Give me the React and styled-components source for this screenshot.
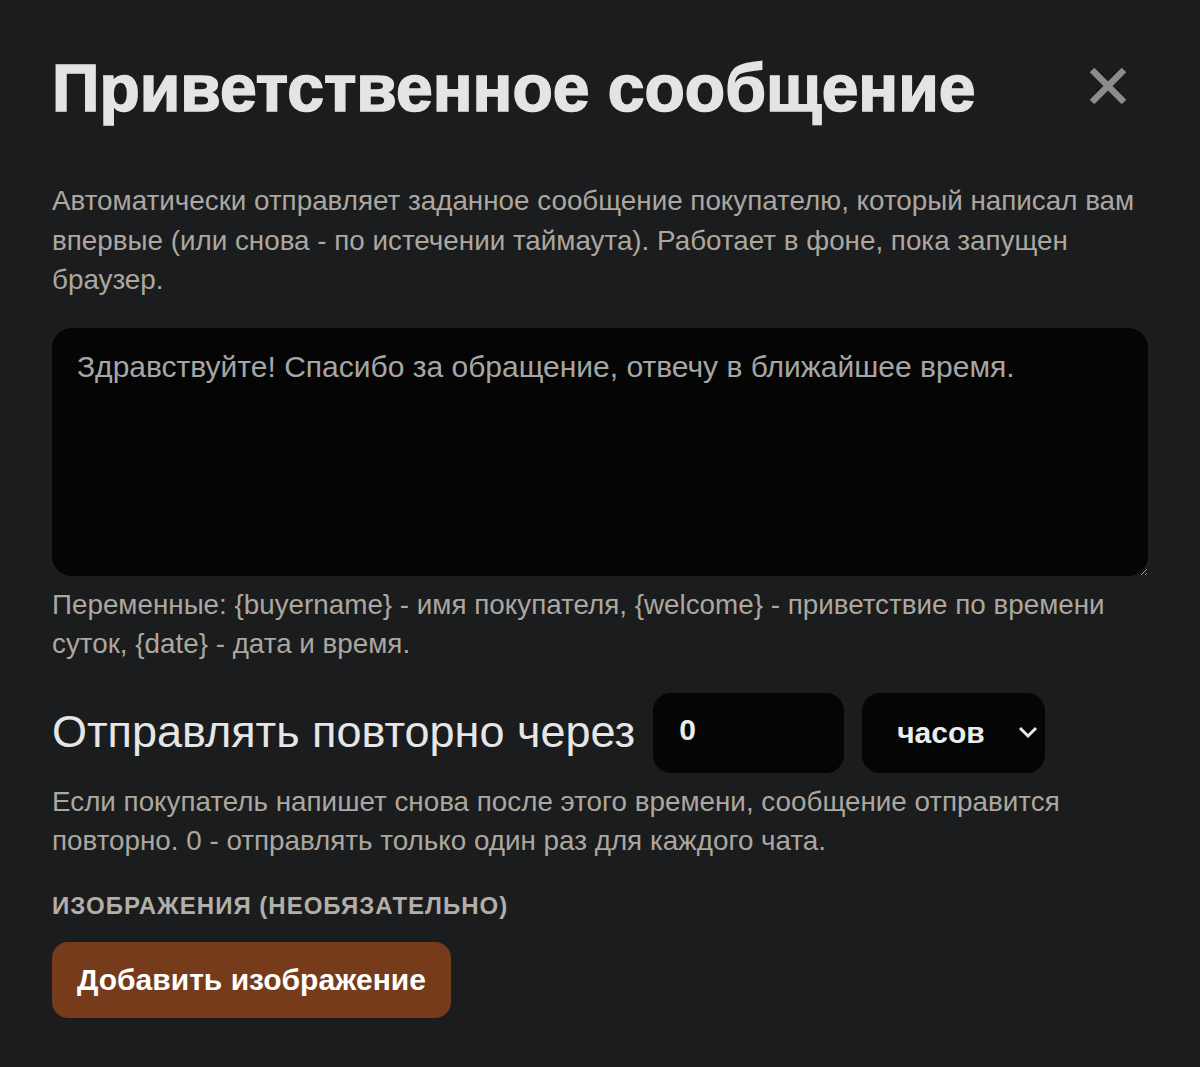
import React, { useState } from 'react';
import styled, { createGlobalStyle } from 'styled-components';

const GlobalStyle = createGlobalStyle`
  html, body {
    margin: 0;
    padding: 0;
    background: #1b1c1e;
  }
  body {
    font-family: "Liberation Sans", Arial, sans-serif;
  }
`;

const Modal = styled.div`
  box-sizing: border-box;
  width: 1200px;
  min-height: 1067px;
  padding: 50px 52px 48px;
  background: #1b1c1e;
  color: #e6e6e6;
`;

const Header = styled.div`
  display: flex;
  align-items: flex-start;
  justify-content: space-between;
`;

const Title = styled.h1`
  margin: 0;
  font-size: 66px;
  font-weight: 700;
  line-height: 76px;
  color: #e4e4e4;
  -webkit-text-stroke: 1.6px #e4e4e4;
`;

const CloseButton = styled.button`
  display: flex;
  align-items: center;
  justify-content: center;
  width: 60px;
  height: 60px;
  margin: 6px 10px 0 0;
  padding: 0;
  border: none;
  background: none;
  cursor: pointer;
`;

const Text = styled.p`
  margin: ${(p) => p.$margin || '0'};
  font-size: 27.8px;
  line-height: 39.5px;
  color: #aca79f;
`;

const MessageInput = styled.textarea`
  box-sizing: border-box;
  display: block;
  width: 100%;
  height: 248px;
  margin: 28px 0 9px;
  padding: 21px 25px;
  border: none;
  border-radius: 20px;
  background: #050505;
  color: #a6a6a6;
  font-family: "Liberation Sans", Arial, sans-serif;
  font-size: 30px;
  line-height: 36px;
  resize: vertical;
  outline: none;
`;

const RepeatRow = styled.div`
  display: flex;
  align-items: center;
  gap: 18px;
  margin: 29px 0 9px;
`;

const RepeatLabel = styled.span`
  font-size: 45px;
  color: #e6e6e6;
  padding-bottom: 2px;
`;

const NumberInput = styled.input`
  box-sizing: border-box;
  width: 191px;
  height: 80px;
  padding: 0 26px 6px;
  border: none;
  border-radius: 18px;
  background: #050505;
  color: #ececec;
  font-family: "Liberation Sans", Arial, sans-serif;
  font-size: 30px;
  font-weight: 700;
  outline: none;
`;

const SelectWrap = styled.div`
  position: relative;
  width: 183px;
  height: 80px;
`;

const Select = styled.select`
  box-sizing: border-box;
  width: 100%;
  height: 100%;
  padding: 0 0 0 35px;
  border: none;
  border-radius: 18px;
  background: #050505;
  color: #ececec;
  font-family: "Liberation Sans", Arial, sans-serif;
  font-size: 30px;
  font-weight: 700;
  appearance: none;
  outline: none;
`;

const Chevron = styled.svg`
  position: absolute;
  right: 6px;
  top: 32px;
  pointer-events: none;
`;

const SectionLabel = styled.div`
  margin: 31px 0 22px;
  font-size: 24px;
  line-height: 28px;
  font-weight: 700;
  letter-spacing: 1px;
  color: #b3aea6;
`;

const AddButton = styled.button`
  box-sizing: border-box;
  height: 76px;
  padding: 0 25px;
  border: none;
  border-radius: 16px;
  background: #763b1a;
  color: #ffffff;
  font-family: "Liberation Sans", Arial, sans-serif;
  font-size: 30px;
  font-weight: 700;
  cursor: pointer;
`;

const variablesHint =
  'Переменные: {buyername} - имя покупателя, {welcome} - приветствие по времени суток, {date} - дата и время.';

export default function App() {
  const [message, setMessage] = useState('Здравствуйте! Спасибо за обращение, отвечу в ближайшее время.');
  const [delay, setDelay] = useState('0');
  const [unit, setUnit] = useState('hours');

  return (
    <>
      <GlobalStyle />
      <Modal>
        <Header>
          <Title>Приветственное сообщение</Title>
          <CloseButton aria-label="Закрыть">
            <svg width="40" height="40" viewBox="0 0 40 40">
              <path d="M4 4 L36 36 M36 4 L4 36" stroke="#8c8c8c" strokeWidth="6.5" />
            </svg>
          </CloseButton>
        </Header>

        <Text $margin="55px 0 0">
          Автоматически отправляет заданное сообщение покупателю, который написал вам
          впервые (или снова - по истечении таймаута). Работает в фоне, пока запущен
          браузер.
        </Text>

        <MessageInput value={message} onChange={(e) => setMessage(e.target.value)} />

        <Text>{variablesHint}</Text>

        <RepeatRow>
          <RepeatLabel>Отправлять повторно через</RepeatLabel>
          <NumberInput value={delay} onChange={(e) => setDelay(e.target.value)} />
          <SelectWrap>
            <Select value={unit} onChange={(e) => setUnit(e.target.value)}>
              <option value="minutes">минут</option>
              <option value="hours">часов</option>
              <option value="days">дней</option>
            </Select>
            <Chevron width="22" height="15" viewBox="0 0 22 15">
              <path d="M3 3 L11 11 L19 3" fill="none" stroke="#e6e6e6" strokeWidth="3" />
            </Chevron>
          </SelectWrap>
        </RepeatRow>

        <Text>
          Если покупатель напишет снова после этого времени, сообщение отправится
          повторно. 0 - отправлять только один раз для каждого чата.
        </Text>

        <SectionLabel>ИЗОБРАЖЕНИЯ (НЕОБЯЗАТЕЛЬНО)</SectionLabel>
        <AddButton>Добавить изображение</AddButton>
      </Modal>
    </>
  );
}
